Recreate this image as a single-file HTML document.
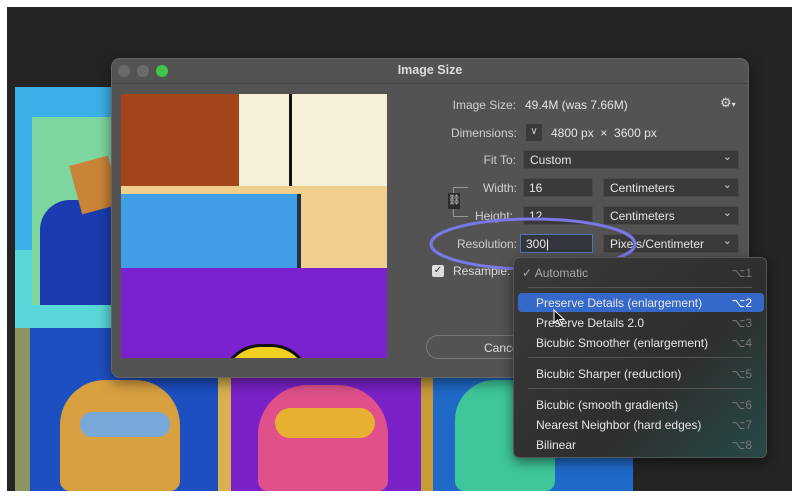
<!DOCTYPE html><html><head><style>
*{margin:0;padding:0;box-sizing:border-box}
body{width:800px;height:499px;background:#fff;position:relative;overflow:hidden;font-family:"Liberation Sans",sans-serif}
.a{position:absolute}
.lbl{position:absolute;color:#cfcfcf;font-size:12px;text-align:right;width:100px}
.fld{position:absolute;background:#3a3a3a;border:1px solid #4a4a4a;color:#e6e6e6;font-size:12px;padding:2px 5px;height:19px}
.sel{position:absolute;background:#3a3a3a;border:1px solid #4a4a4a;color:#e6e6e6;font-size:12px;padding:2px 6px;height:19px}
.sel:after{content:"⌄";position:absolute;right:6px;top:-1px;font-size:11px;color:#ccc}
.mi{position:absolute;left:22px;color:#e8e8e8;font-size:12px}
.sc{position:absolute;right:14px;color:#777;font-size:12px}
.sep{position:absolute;left:14px;right:14px;height:1px;background:#555}
</style></head><body>
<div class="a" style="left:7px;top:7px;width:785px;height:484px;background:#242424"></div>
<div class="a" style="left:15px;top:87px;width:215px;height:240px;background:#3bb0e8"></div>
<div class="a" style="left:15px;top:250px;width:215px;height:78px;background:#5ad7d8"></div>
<div class="a" style="left:32px;top:117px;width:90px;height:188px;background:#7fd7a0"></div>
<div class="a" style="left:40px;top:200px;width:75px;height:105px;background:#1a3cb0;border-radius:30px 10px 0 0"></div>
<div class="a" style="left:75px;top:160px;width:40px;height:50px;background:#c98437;transform:rotate(-15deg)"></div>
<div class="a" style="left:15px;top:328px;width:15px;height:163px;background:#8a9560"></div>
<div class="a" style="left:30px;top:328px;width:190px;height:163px;background:#1d4fc0"></div>
<div class="a" style="left:60px;top:380px;width:120px;height:111px;background:#d9a040;border-radius:45px 45px 10px 10px"></div>
<div class="a" style="left:80px;top:412px;width:90px;height:25px;background:#79a9d8;border-radius:12px"></div>
<div class="a" style="left:218px;top:378px;width:13px;height:113px;background:#d8b050"></div>
<div class="a" style="left:231px;top:378px;width:190px;height:113px;background:#7a22c8"></div>
<div class="a" style="left:258px;top:385px;width:130px;height:106px;background:#e0508a;border-radius:50px 50px 10px 10px"></div>
<div class="a" style="left:275px;top:408px;width:100px;height:30px;background:#e8b030;border-radius:15px"></div>
<div class="a" style="left:421px;top:378px;width:12px;height:113px;background:#c79a3a"></div>
<div class="a" style="left:433px;top:378px;width:200px;height:113px;background:#1f6ac8"></div>
<div class="a" style="left:455px;top:380px;width:100px;height:111px;background:#3fc79a;border-radius:40px 40px 10px 10px"></div>
<div class="a" style="left:111px;top:58px;width:638px;height:320px;background:#535353;border-radius:9px;border:1px solid #666;box-shadow:0 4px 14px rgba(0,0,0,.5)"></div>
<div class="a" style="left:112px;top:83px;width:636px;height:1px;background:#444"></div>
<div class="a" style="left:118px;top:65px;width:12px;height:12px;border-radius:6px;background:#6a6a6a"></div>
<div class="a" style="left:137px;top:65px;width:12px;height:12px;border-radius:6px;background:#6a6a6a"></div>
<div class="a" style="left:156px;top:65px;width:12px;height:12px;border-radius:6px;background:#3ec64a"></div>
<div class="a" style="left:111px;top:63px;width:638px;text-align:center;color:#ddd;font-size:12.5px;font-weight:bold">Image Size</div>
<div class="a" style="left:121px;top:94px;width:266px;height:264px;background:#7a22d0;overflow:hidden">
 <div class="a" style="left:0;top:0;width:120px;height:92px;background:#a2461a"></div>
 <div class="a" style="left:118px;top:0;width:148px;height:92px;background:#f5f0d8"></div>
 <div class="a" style="left:168px;top:0;width:3px;height:92px;background:#111"></div>
 <div class="a" style="left:0;top:92px;width:266px;height:82px;background:#f0cf8c"></div>
 <div class="a" style="left:0;top:100px;width:180px;height:74px;background:#3f9ee6;border-right:4px solid #234"></div>
 <div class="a" style="left:100px;top:250px;width:90px;height:40px;border-radius:45px 45px 0 0;background:#f0d020;border:3px solid #111"></div>
</div>
<div class="lbl" style="left:416px;top:98px">Image Size:</div>
<div class="a" style="left:525px;top:98px;color:#e4e4e4;font-size:12px">49.4M (was 7.66M)</div>
<div class="a" style="left:720px;top:95px;color:#ddd;font-size:13px">⚙<span style="font-size:8px">▾</span></div>
<div class="lbl" style="left:417px;top:126px">Dimensions:</div>
<div class="a" style="left:526px;top:124px;width:16px;height:17px;background:#3a3a3a;color:#ccc;font-size:10px;text-align:center;line-height:16px">∨</div>
<div class="a" style="left:551px;top:126px;color:#e4e4e4;font-size:12px">4800 px &nbsp;×&nbsp; 3600 px</div>
<div class="lbl" style="left:416px;top:153px">Fit To:</div>
<div class="sel" style="left:523px;top:150px;width:216px">Custom</div>
<div class="lbl" style="left:417px;top:181px">Width:</div>
<div class="fld" style="left:523px;top:178px;width:70px">16</div>
<div class="sel" style="left:603px;top:178px;width:136px">Centimeters</div>
<div class="lbl" style="left:413px;top:209px">Height:</div>
<div class="fld" style="left:523px;top:206px;width:70px">12</div>
<div class="sel" style="left:603px;top:206px;width:136px">Centimeters</div>
<div class="a" style="left:453px;top:187px;width:15px;height:1px;background:#999"></div>
<div class="a" style="left:453px;top:187px;width:1px;height:8px;background:#999"></div>
<div class="a" style="left:453px;top:208px;width:1px;height:8px;background:#999"></div>
<div class="a" style="left:453px;top:216px;width:15px;height:1px;background:#999"></div>
<div class="a" style="left:448px;top:193px;width:12px;height:16px;background:#2c2c2c;color:#ddd;font-size:10px;text-align:center;line-height:16px">⛓</div>
<div class="lbl" style="left:417px;top:237px">Resolution:</div>
<div class="fld" style="left:520px;top:234px;width:73px;border-color:#5573b8;background:#34363d">300<span style="color:#fff">|</span></div>
<div class="sel" style="left:603px;top:234px;width:136px">Pixels/Centimeter</div>
<div class="a" style="left:432px;top:265px;width:12px;height:12px;background:#ddd;border-radius:2px;color:#333;font-size:10px;line-height:12px;text-align:center">✓</div>
<div class="a" style="left:453px;top:264px;color:#ddd;font-size:12px">Resample:</div>
<div class="a" style="left:426px;top:335px;width:100px;height:24px;border:1px solid #777;border-radius:12px;color:#ddd;font-size:12px;padding:5px 0 0 57px">Cancel</div>
<svg class="a" style="left:428px;top:212px" width="216" height="60"><ellipse cx="105" cy="32" rx="102" ry="25" fill="none" stroke="#7a78e8" stroke-width="3"/></svg>
<div class="a" style="left:513px;top:257px;width:254px;height:201px;background:linear-gradient(135deg,#3a3a3a,#2e2e2e 60%,#264a48);border:1px solid #555;border-radius:6px;box-shadow:0 4px 12px rgba(0,0,0,.5)">
 <div class="mi" style="top:8px;left:8px;color:#aaa">✓ Automatic</div><div class="sc" style="top:8px">⌥1</div>
 <div class="sep" style="top:29px"></div>
 <div class="a" style="left:4px;top:35px;width:246px;height:19px;background:#3569c9;border-radius:4px"></div>
 <div class="mi" style="top:38px">Preserve Details (enlargement)</div><div class="sc" style="top:38px;color:#fff">⌥2</div>
 <div class="mi" style="top:58px">Preserve Details 2.0</div><div class="sc" style="top:58px">⌥3</div>
 <div class="mi" style="top:78px">Bicubic Smoother (enlargement)</div><div class="sc" style="top:78px">⌥4</div>
 <div class="sep" style="top:99px"></div>
 <div class="mi" style="top:109px">Bicubic Sharper (reduction)</div><div class="sc" style="top:109px">⌥5</div>
 <div class="sep" style="top:130px"></div>
 <div class="mi" style="top:140px">Bicubic (smooth gradients)</div><div class="sc" style="top:140px">⌥6</div>
 <div class="mi" style="top:160px">Nearest Neighbor (hard edges)</div><div class="sc" style="top:160px">⌥7</div>
 <div class="mi" style="top:180px">Bilinear</div><div class="sc" style="top:180px">⌥8</div>
</div>
<svg class="a" style="left:553px;top:309px" width="12" height="18"><path d="M1 1 L1 14 L4.5 11 L7 16.5 L9 15.5 L6.5 10.5 L11 10.5 Z" fill="#111" stroke="#fff" stroke-width="1"/></svg>
</body></html>
